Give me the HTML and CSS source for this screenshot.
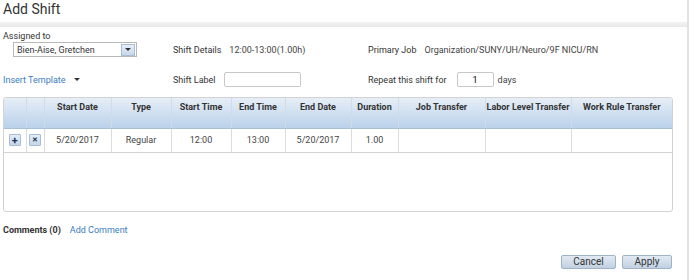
FILE: index.html
```html
<!DOCTYPE html>
<html lang="en">
<head>
  <meta charset="UTF-8">
  <title>Add Shift</title>
  <link rel="stylesheet" href="styles.css">
</head>
<body>
  <div class="page">
    <h1 class="title">Add Shift</h1>
    <div class="divider"></div>

    <div class="assigned-label">Assigned to</div>

    <!-- Shift form -->
    <div class="form-grid">
      <div class="cell">
        <div class="select">
          <span class="select-text">Bien-Aise, Gretchen</span>
          <span class="select-btn"><span class="caret"></span></span>
        </div>
      </div>
      <div class="cell">
        <span class="label">Shift Details</span>
        <span class="value">12:00-13:00(1.00h)</span>
      </div>
      <div class="cell">
        <span class="label">Primary Job</span>
        <span class="value">Organization/SUNY/UH/Neuro/9F NICU/RN</span>
      </div>

      <div class="cell">
        <a href="#" class="link">Insert Template</a>
        <span class="caret"></span>
      </div>
      <div class="cell">
        <span class="label">Shift Label</span>
        <input type="text" class="text-input label-input">
      </div>
      <div class="cell">
        <span class="label">Repeat this shift for</span>
        <input type="text" class="text-input repeat-input" value="1">
        <span class="value">days</span>
      </div>
    </div>

    <!-- Shift grid -->
    <div class="grid-wrap">
      <table class="shift-table">
        <thead>
          <tr>
            <th class="c-add"></th>
            <th class="c-del"></th>
            <th class="c-sdate">Start Date</th>
            <th class="c-type">Type</th>
            <th class="c-stime">Start Time</th>
            <th class="c-etime">End Time</th>
            <th class="c-edate">End Date</th>
            <th class="c-dur">Duration</th>
            <th class="c-job">Job Transfer</th>
            <th class="c-labor">Labor Level Transfer</th>
            <th>Work Rule Transfer</th>
          </tr>
        </thead>
        <tbody>
          <tr>
            <td><span class="icon-btn">+</span></td>
            <td><span class="icon-btn small">&#x2715;</span></td>
            <td>5/20/2017</td>
            <td>Regular</td>
            <td>12:00</td>
            <td>13:00</td>
            <td>5/20/2017</td>
            <td>1.00</td>
            <td></td>
            <td></td>
            <td></td>
          </tr>
        </tbody>
      </table>
    </div>

    <div class="comments">
      <span class="comments-count">Comments (0)</span>
      <a href="#" class="link">Add Comment</a>
    </div>

    <div class="actions">
      <button type="button" class="btn">Cancel</button>
      <button type="button" class="btn apply">Apply</button>
    </div>
  </div>
</body>
</html>
```

FILE: styles.css
```css
/* Add Shift dialog */
body {
  margin: 0;
  background: #fff;
  font-family: Roboto, "Liberation Sans", sans-serif;
  font-size: 9px;
  color: #333;
}
.page {
  width: 689px;
  height: 280px;
  border-right: 2px solid #e2e2e2;
  box-sizing: border-box;
  padding: 0 3px;
}
.title {
  margin: 0;
  padding-top: 2px;
  height: 20px;
  font-size: 14px;
  font-weight: normal;
  color: #333;
  line-height: 15px;
}
.divider {
  height: 5px;
  margin: 0 -3px;
  background: linear-gradient(#f3f3f3, #e8e8e8);
}
.assigned-label {
  margin-top: 3px;
  height: 12px;
  line-height: 12px;
}
.form-grid {
  display: grid;
  grid-template-columns: 170px 195px 1fr;
  grid-template-rows: 15px 15px;
  row-gap: 15px;
}
.cell {
  display: flex;
  align-items: center;
  gap: 8px;
}
.label {
  color: #333;
}
.value {
  color: #444;
}
.select {
  margin-left: 10px;
  width: 124px;
  height: 15px;
  border: 1px solid #b8b8b8;
  box-sizing: border-box;
  display: flex;
  align-items: center;
  justify-content: space-between;
}
.select-text {
  padding-left: 3px;
}
.select-btn {
  width: 14px;
  height: 12px;
  margin-right: 1px;
  background: linear-gradient(#e4eef8, #c6d8ea);
  border: 1px solid #a9bdd3;
  box-sizing: border-box;
  display: flex;
  align-items: center;
  justify-content: center;
}
.caret {
  width: 0;
  height: 0;
  border-left: 3px solid transparent;
  border-right: 3px solid transparent;
  border-top: 3px solid #333;
}
.link {
  color: #3a7dbf;
  text-decoration: none;
}
.text-input {
  height: 15px;
  border: 1px solid #c8c8c8;
  border-radius: 2px;
  box-sizing: border-box;
  font: inherit;
  padding: 0 3px;
}
.label-input {
  width: 77px;
}
.repeat-input {
  width: 37px;
  text-align: center;
  margin-left: 2px;
  margin-right: -4px;
}
.grid-wrap {
  margin-top: 10px;
  width: 670px;
  height: 115px;
  border: 1px solid #d2d2d2;
  border-radius: 3px;
  box-sizing: border-box;
  overflow: hidden;
}
.shift-table {
  width: 100%;
  border-collapse: collapse;
  table-layout: fixed;
}
.shift-table th {
  height: 30px;
  padding: 4px 0 0;
  vertical-align: top;
  font-weight: bold;
  color: #333;
  background: linear-gradient(#e6eef7, #b9d1ea);
  border-left: 1px solid #cfdbe7;
  border-bottom: 1px solid #a8c0d8;
  box-sizing: border-box;
}
.shift-table th:first-child,
.shift-table td:first-child {
  border-left: none;
}
.shift-table td {
  height: 23px;
  padding: 0;
  text-align: center;
  border-left: 1px solid #dcdcdc;
  border-bottom: 1px solid #d2d2d2;
  color: #444;
}
.c-add { width: 22px; }
.c-del { width: 18px; }
.c-sdate { width: 67px; }
.c-type { width: 60px; }
.c-stime { width: 60px; }
.c-etime { width: 54px; }
.c-edate { width: 66px; }
.c-dur { width: 47px; }
.c-job { width: 87px; }
.c-labor { width: 86px; }
.icon-btn {
  display: inline-flex;
  align-items: center;
  justify-content: center;
  width: 12px;
  height: 12px;
  box-sizing: border-box;
  background: linear-gradient(#e3edf8, #c4d6ea);
  border: 1px solid #a8bcd2;
  border-radius: 1px;
  font-weight: bold;
  font-size: 11px;
  line-height: 1;
  color: #1d3557;
}
.icon-btn.small {
  font-size: 7px;
}
.comments {
  margin-top: 13px;
  display: flex;
  gap: 9px;
}
.comments-count {
  font-weight: bold;
  color: #333;
}
.actions {
  margin-top: 20px;
  display: flex;
  justify-content: flex-end;
  gap: 6px;
  padding-right: 12px;
}
.btn {
  height: 14px;
  padding: 0;
  border: 1px solid #9fb2c6;
  border-radius: 2px;
  background: linear-gradient(#e2eaf3, #c0d0e2);
  font-family: inherit;
  font-size: 10px;
  color: #333;
  width: 55px;
  line-height: 12px;
}
.btn.apply {
  width: 50px;
}
```
